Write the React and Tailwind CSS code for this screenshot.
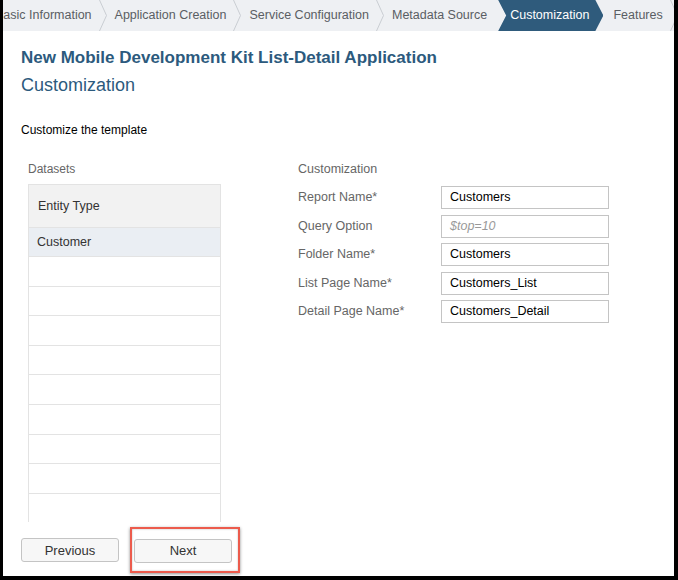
import React from "react";

const tabs = [
  { label: "Basic Information" },
  { label: "Application Creation" },
  { label: "Service Configuration" },
  { label: "Metadata Source" },
  { label: "Customization", active: true },
  { label: "Features" },
];

const fields = [
  { label: "Report Name*", value: "Customers" },
  { label: "Query Option", placeholder: "$top=10" },
  { label: "Folder Name*", value: "Customers" },
  { label: "List Page Name*", value: "Customers_List" },
  { label: "Detail Page Name*", value: "Customers_Detail" },
];

const Chevron = () => (
  <svg width="8" height="31" viewBox="0 0 8 31" className="shrink-0">
    <polyline points="0.5,0 7.5,15.5 0.5,31" fill="none" stroke="#c9cdd2" strokeWidth="1" />
  </svg>
);

function Breadcrumb() {
  return (
    <div className="flex h-[31px] shrink-0 items-center overflow-hidden bg-[#eef0f3] text-[12.5px] text-[#5a5e63]">
      <div className="ml-[-16px] flex h-full items-center">
        {tabs.map((t, i) =>
          t.active ? (
            <div
              key={i}
              className="ml-[4px] mr-[2px] flex h-full items-center whitespace-nowrap bg-[#2f5b7c] pl-[12px] pr-[14px] text-white [clip-path:polygon(0_0,calc(100%-8px)_0,100%_50%,calc(100%-8px)_100%,0_100%,8px_50%)]"
            >
              {t.label}
            </div>
          ) : (
            <React.Fragment key={i}>
              <span className="whitespace-nowrap pl-[8px] pr-[7px]">{t.label}</span>
              {tabs[i + 1] && tabs[i + 1].active ? null : <Chevron />}
            </React.Fragment>
          )
        )}
      </div>
    </div>
  );
}

export default function App() {
  const emptyRows = Array.from({ length: 9 });
  return (
    <div
      className="flex h-[580px] w-[678px] flex-col border-b-[4px] border-l-[3px] border-r-[4px] border-black bg-white"
      style={{ fontFamily: '"Liberation Sans", Arial, sans-serif' }}
    >
      <Breadcrumb />
      <div className="flex flex-1 flex-col pl-[18px]">
        <h1 className="mt-[17px] text-[17px] font-bold leading-[20px] text-[#2c5a7d]">
          New Mobile Development Kit List-Detail Application
        </h1>
        <h2 className="mt-[6px] text-[18px] leading-[22px] text-[#2c5a7d]">Customization</h2>
        <p className="mt-[26px] text-[12px] leading-[16px] text-black">Customize the template</p>

        <div className="mt-[23px] flex">
          <div className="ml-[7px] w-[193px]">
            <div className="text-[12px] leading-[16px] text-[#666]">Datasets</div>
            <div className="mt-[7px] border-x border-t border-[#e3e3e3]">
              <div className="flex h-[42px] items-center bg-[#f2f2f2] px-[9px] text-[12.5px] text-[#333]">
                Entity Type
              </div>
              <div className="flex h-[29px] items-center border-t border-[#e3e3e3] bg-[#eaeef3] px-[8px] text-[12.5px] text-[#333]">
                Customer
              </div>
              {emptyRows.map((_, i) => (
                <div key={i} className="h-[29.6px] border-t border-[#e3e3e3]" />
              ))}
            </div>
          </div>

          <div className="ml-[77px] w-[311px]">
            <div className="text-[12.5px] leading-[16px] text-[#666]">Customization</div>
            <div className="mt-[9px] flex flex-col gap-[5.5px]">
              {fields.map((f) => (
                <div key={f.label} className="flex h-[23px] items-center">
                  <span className="w-[143px] text-[12.5px] text-[#666]">{f.label}</span>
                  <div className="flex h-[23px] w-[168px] items-center border border-[#c4c4c4] px-[8px] text-[12.5px]">
                    {f.value ? (
                      <span className="text-black">{f.value}</span>
                    ) : (
                      <span className="italic text-[#999]">{f.placeholder}</span>
                    )}
                  </div>
                </div>
              ))}
            </div>
          </div>
        </div>

        <div className="mt-auto mb-[13px] flex gap-[15px]">
          <button className="h-[24px] w-[98px] rounded-[3px] border border-[#c4c4c4] bg-[#f7f7f7] text-[13px] text-[#333]">
            Previous
          </button>
          <div className="relative">
            <button className="h-[24px] w-[98px] rounded-[3px] border border-[#c4c4c4] bg-[#f7f7f7] text-[13px] text-[#333]">
              Next
            </button>
            <div className="pointer-events-none absolute left-[-4px] top-[-11px] h-[46px] w-[110px] border-2 border-[#ec5b4c] shadow-[0_1px_3px_rgba(0,0,0,0.45),inset_0_0_2px_rgba(0,0,0,0.3)]" />
          </div>
        </div>
      </div>
    </div>
  );
}
